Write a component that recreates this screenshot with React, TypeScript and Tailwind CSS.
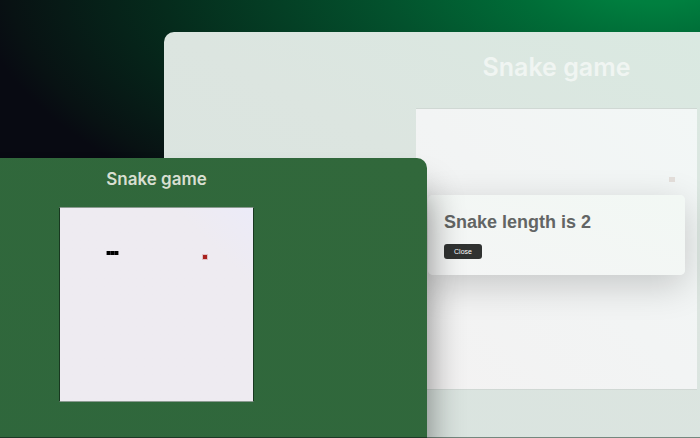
function LengthDialog() {
  return (
    <section
      role="dialog"
      aria-labelledby="snake-length"
      className="absolute inset-x-[264px] top-[163px] rounded-[5px] bg-gradient-to-tr from-[#f4f5f5] to-[#f2f8f4] px-4 py-4 font-['Liberation_Sans',Arial,sans-serif] shadow-[0_10px_36px_rgba(0,0,0,0.19)]"
    >
      <h2 id="snake-length" className="text-lg leading-[22px] font-bold whitespace-nowrap text-[#626564]">
        Snake length is 2
      </h2>
      <button type="button" className="mt-[11px] block h-[15px] w-[38px] rounded-[3px] bg-[#303231] text-[7px] leading-[15px] text-white">
        Close
      </button>
    </section>
  );
}

function FinishedGame() {
  return (
    <article className="absolute top-8 bottom-0 left-[164px] flex w-[785px] flex-col items-center gap-[27px] rounded-t-[10px] border-b border-[#74877e] bg-gradient-to-tr from-[#d9e3df] via-[#dce5e0] via-50% to-[#d9ebe2] pt-[21px]">
      <h1 className="font-['Inter',sans-serif] text-[25px] leading-7 font-semibold text-[#f0f5f2]">Snake game</h1>
      <div className="flex h-[282px] w-[281px] shrink-0 items-start justify-end border-y border-[#d0d8d4] bg-gradient-to-tr from-[#f3f2f2] via-[#f2f4f4] to-[#f2f7f6] px-[22px] py-[68px]">
        <span className="h-[5px] w-1.5 bg-[#e4dfdb]" />
      </div>
      <LengthDialog />
    </article>
  );
}

function ActiveGame() {
  return (
    <article className="absolute top-[158px] bottom-0 left-[-114px] flex w-[541px] flex-col items-center gap-[18px] rounded-t-[10px] border-b border-[#1c3a26] bg-gradient-to-tr from-[#2f673c] to-[#31683b] pt-[11px] shadow-[0_34px_36px_rgba(0,0,0,0.48)]">
      <h1 className="font-['Inter',sans-serif] text-[17px] leading-5 font-semibold text-[#d8dfd1]">Snake game</h1>
      <div className="flex h-[195px] w-[195px] shrink-0 items-start justify-between border border-x-[#183820] border-y-[#8a9a90] bg-gradient-to-tr from-[#eeebf1] from-80% to-[#ecebf8] px-[46px] py-[43px]">
        <div className="flex divide-x divide-[#35333a] border-x border-[#8a888e] bg-black">
          <span className="h-1 w-1" />
          <span className="h-1 w-1" />
          <span className="h-1 w-[3px]" />
        </div>
        <span className="mt-1 size-1 bg-[#a9211f] outline outline-[#a9211f]/20" />
      </div>
    </article>
  );
}

export default function App() {
  return (
    <main className="relative h-screen overflow-hidden bg-[radial-gradient(103%_72%_at_94%_-5%,#008140_0%,#007f3f_8%,#006c37_20%,#03522d_38%,#052b1c_69%,#081213_90%,#080a12_95%)]">
      <FinishedGame />
      <ActiveGame />
    </main>
  );
}
